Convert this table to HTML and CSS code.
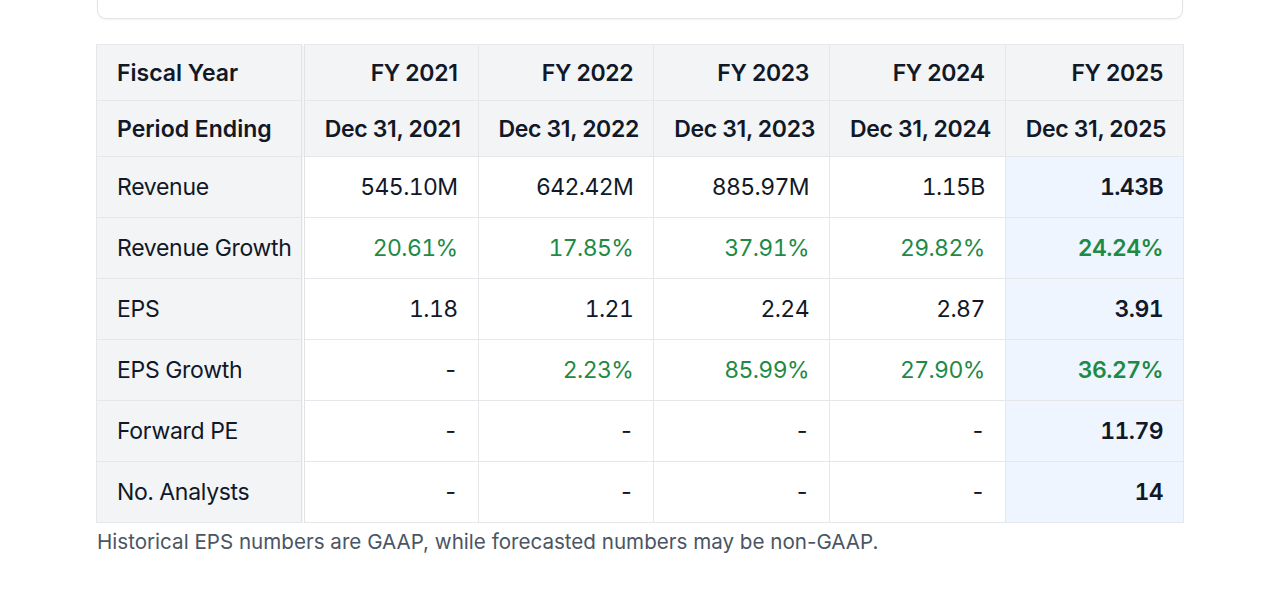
FILE: index.html
```html
<!DOCTYPE html>
<html>
<head>
<meta charset="utf-8">
<link rel="stylesheet" href="styles.css">
</head>
<body>
<div class="page">
  <div class="card-top"></div>
  <div class="table-wrap">
    <table class="fin">
      <colgroup>
        <col class="c-lead"><col class="c-y1"><col class="c-y"><col class="c-y"><col class="c-y"><col class="c-last">
      </colgroup>
      <thead>
        <tr>
          <th class="lead">Fiscal Year</th>
          <th>FY 2021</th><th>FY 2022</th><th>FY 2023</th><th>FY 2024</th><th>FY 2025</th>
        </tr>
        <tr>
          <th class="lead">Period Ending</th>
          <th>Dec 31, 2021</th><th>Dec 31, 2022</th><th>Dec 31, 2023</th><th>Dec 31, 2024</th><th>Dec 31, 2025</th>
        </tr>
      </thead>
      <tbody>
        <tr>
          <td class="lead">Revenue</td>
          <td>545.10M</td><td>642.42M</td><td>885.97M</td><td>1.15B</td><td class="fc">1.43B</td>
        </tr>
        <tr>
          <td class="lead">Revenue Growth</td>
          <td class="pos">20.61%</td><td class="pos">17.85%</td><td class="pos">37.91%</td><td class="pos">29.82%</td><td class="fc pos">24.24%</td>
        </tr>
        <tr>
          <td class="lead">EPS</td>
          <td>1.18</td><td>1.21</td><td>2.24</td><td>2.87</td><td class="fc">3.91</td>
        </tr>
        <tr>
          <td class="lead">EPS Growth</td>
          <td>-</td><td class="pos">2.23%</td><td class="pos">85.99%</td><td class="pos">27.90%</td><td class="fc pos">36.27%</td>
        </tr>
        <tr>
          <td class="lead">Forward PE</td>
          <td>-</td><td>-</td><td>-</td><td>-</td><td class="fc">11.79</td>
        </tr>
        <tr>
          <td class="lead">No. Analysts</td>
          <td>-</td><td>-</td><td>-</td><td>-</td><td class="fc">14</td>
        </tr>
      </tbody>
    </table>
  </div>
  <p class="note">Historical EPS numbers are GAAP, while forecasted numbers may be non-GAAP.</p>
</div>
</body>
</html>
```
FILE: styles.css
```css
html, body {
  margin: 0;
  padding: 0;
  background: #ffffff;
}
body {
  font-family: Inter, "Noto Sans", "Liberation Sans", sans-serif;
  color: #111827;
}
.page {
  width: 1088px;
  margin: 0 0 0 96px;
}
.card-top {
  height: 18px;
  margin: 0 1px;
  border: 1px solid #e2e4e8;
  border-top: none;
  border-radius: 0 0 9px 9px;
  box-shadow: 0 1px 2px rgba(0,0,0,0.06);
  background: #fff;
}
.table-wrap {
  margin-top: 25px;
}
.fin {
  width: 1088px;
  border-collapse: collapse;
  table-layout: fixed;
  border: 1px solid #d9dce1;
}
.c-lead { width: 206px; }
.c-y1 { width: 175px; }
.c-y { width: 175.5px; }
.c-last { width: 178px; }
.fin th, .fin td {
  border: 1px solid #e5e7eb;
  padding: 0 20px 0 20px;
  text-align: right;
  font-size: 23px;
  white-space: nowrap;
}
.fin th {
  height: 55px;
  background: #f3f4f6;
  font-weight: 600;
  letter-spacing: -0.35px;
}
.fin td {
  height: 60px;
  font-weight: 400;
  font-variant-numeric: tabular-nums;
  letter-spacing: -0.6px;
}
.fin .lead {
  text-align: left;
  background: #f3f4f6;
  border-right: 4px double #e1e3e7;
  font-weight: 400;
  letter-spacing: -0.3px;
}
.fin th.lead {
  font-weight: 600;
  letter-spacing: 0;
}
.fin td.fc {
  background: #eff5fe;
  font-weight: 600;
}
.fin .pos {
  color: #1e8a45;
}
.note {
  margin: 6px 0 0 1px;
  font-size: 20.6px;
  color: #4b5563;
}
```
